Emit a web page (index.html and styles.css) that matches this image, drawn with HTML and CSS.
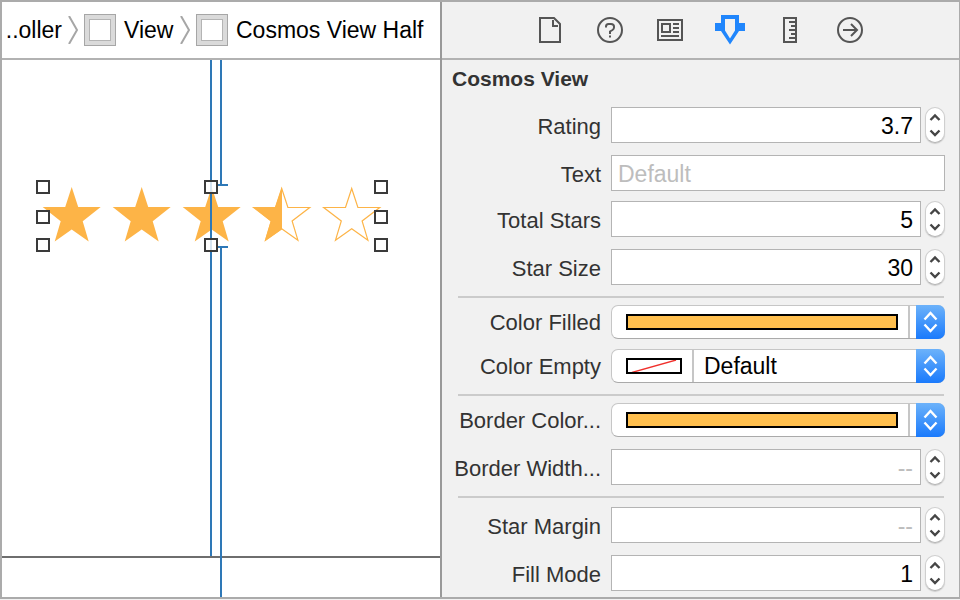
FILE: index.html
```html
<!DOCTYPE html>
<html lang="en">
<head>
<meta charset="utf-8">
<title>Cosmos View</title>
<link rel="stylesheet" href="styles.css">
</head>
<body>
<svg class="defs" aria-hidden="true">
  <defs>
    <path id="star" d="M0-21 6.500-1H29L11 13.200 17 33.500 0 21.500-17 33.500-11 13.200-29-1H-6.500Z"/>
    <path id="star-outline" d="M0-19.500 6.200-.5H28L10.400 13 16.200 32.200 0 20.700-16.200 32.200-10.400 13-28-.5H-6.200Z"/>
    <symbol id="steps" viewBox="0 0 18 34">
      <path d="M4.500 12 9 7.500 13.500 12M4.500 22.500 9 27 13.500 22.500" fill="none" stroke="#454545" stroke-width="2.400"/>
    </symbol>
    <symbol id="updown" viewBox="0 0 29 34">
      <path d="M8.500 14.500 14.500 8 20.500 14.500M8.500 19.500 14.500 26 20.500 19.500" fill="none" stroke="#fff" stroke-width="2.400"/>
    </symbol>
    <symbol id="crumb-arrow" viewBox="0 0 10 28">
      <path d="M1 0 9 14 1 28" fill="none" stroke="#a6a6a6" stroke-width="2"/>
    </symbol>
  </defs>
</svg>
<div class="window">
  <main class="editor">
    <nav class="crumbs">
      <a class="crumb crumb-first" href="#">..oller</a>
      <svg class="crumb-arrow"><use href="#crumb-arrow"/></svg>
      <a class="crumb" href="#"><span class="view-icon"></span>View</a>
      <svg class="crumb-arrow"><use href="#crumb-arrow"/></svg>
      <a class="crumb" href="#"><span class="view-icon"></span>Cosmos View Half</a>
    </nav>
    <div class="canvas">
      <svg class="drawing" width="438" height="540" viewBox="2 60 438 540">
        <path d="M2 557H440" stroke="#6e6e6e" stroke-width="2"/>
        <g fill="#fdb447">
          <use href="#star" x="71.700" y="208"/>
          <use href="#star" x="141.700" y="208"/>
          <use href="#star" x="211.700" y="208"/>
          <path d="M282 187 275.200 207H252.700L270.700 221.200 264.700 241.200 282 229.300Z"/>
        </g>
        <g fill="none" stroke="#fdb447" stroke-width="1.200">
          <use href="#star-outline" x="281.700" y="208"/>
          <use href="#star-outline" x="351.700" y="208"/>
        </g>
        <path d="M211 60V556M221 60V185M216 185H228M216 247H228M221 247V597M221 599V600" fill="none" stroke="#2e78b7" stroke-width="2"/>
        <g fill="#fff" fill-opacity=".8" stroke="#3a3a3a" stroke-width="2">
          <rect x="37" y="181" width="12" height="12"/>
          <rect x="37" y="211" width="12" height="12"/>
          <rect x="37" y="239" width="12" height="12"/>
          <rect x="205" y="181" width="12" height="12"/>
          <rect x="205" y="239" width="12" height="12"/>
          <rect x="375" y="181" width="12" height="12"/>
          <rect x="375" y="211" width="12" height="12"/>
          <rect x="375" y="239" width="12" height="12"/>
        </g>
      </svg>
    </div>
  </main>

  <aside class="inspector">
    <div class="tabs">
      <button class="tab" aria-label="File"><svg viewBox="0 0 30 30"><path d="M5 3H19L25 9V27H5Z"/><path d="M18 5V11H23" /></svg></button>
      <button class="tab" aria-label="Help"><svg viewBox="0 0 30 30"><circle cx="15" cy="15" r="12"/><path d="M11 12.500V11.500Q11 9 13.500 9H16Q19 9 19 11.500V12.500Q19 14 17.500 15L15 16.500V19M15 20.500V22.500"/></svg></button>
      <button class="tab" aria-label="Identity"><svg viewBox="0 0 30 30"><path d="M3 5H27V25H3ZM7 9H15V17H7ZM18 9H24M18 13H24M18 17H24M6 21H24"/></svg></button>
      <button class="tab tab-on" aria-label="Attributes"><svg viewBox="0 0 30 30"><path fill-rule="evenodd" d="M6 0H24V8H30V16H24L15 29.500 6 16H0V8H6ZM10 4V15.500L15 23.500 20 15.500V4Z"/></svg></button>
      <button class="tab" aria-label="Size"><svg viewBox="0 0 30 30"><path d="M9 3H21V27H9ZM14 7H21M16 11H21M14 15H21M16 19H21M14 23H21"/></svg></button>
      <button class="tab" aria-label="Connections"><svg viewBox="0 0 30 30"><circle cx="15" cy="15" r="12"/><path d="M8 15H21.500M16 9 22 15 16 21"/></svg></button>
    </div>

    <form class="attributes">
      <h2 class="title">Cosmos View</h2>
      <div class="group">
        <div class="row">
          <label for="rating">Rating</label>
          <input class="field number" id="rating" type="text" value="3.7">
          <button class="stepper" type="button" aria-label="Step rating"><svg><use href="#steps"/></svg></button>
        </div>
        <div class="row">
          <label for="text">Text</label>
          <input class="field" id="text" type="text" placeholder="Default">
        </div>
      </div>
      <div class="group">
        <div class="row">
          <label for="total">Total Stars</label>
          <input class="field number" id="total" type="text" value="5">
          <button class="stepper" type="button" aria-label="Step total stars"><svg><use href="#steps"/></svg></button>
        </div>
        <div class="row">
          <label for="size">Star Size</label>
          <input class="field number" id="size" type="text" value="30">
          <button class="stepper" type="button" aria-label="Step star size"><svg><use href="#steps"/></svg></button>
        </div>
      </div>
      <hr>
      <div class="group group-tight">
        <div class="row row-color">
          <label for="filled">Color Filled</label>
          <div class="popup">
            <button class="well well-wide" id="filled" type="button"><span class="swatch"></span></button>
            <button class="arrows" type="button" aria-label="Choose filled color"><svg><use href="#updown"/></svg></button>
          </div>
        </div>
        <div class="row row-color">
          <label for="empty">Color Empty</label>
          <div class="popup">
            <button class="well" type="button" aria-label="Empty color"><span class="swatch swatch-none"><svg viewBox="0 0 52 12"><path d="M4 12.500 48 0" stroke="#f0302c" stroke-width="1.300"/></svg></span></button>
            <select class="choice" id="empty"><option>Default</option></select>
            <span class="arrows arrows-over"><svg><use href="#updown"/></svg></span>
          </div>
        </div>
      </div>
      <hr>
      <div class="group">
        <div class="row row-color">
          <label for="border-color">Border Color...</label>
          <div class="popup">
            <button class="well well-wide" id="border-color" type="button"><span class="swatch"></span></button>
            <button class="arrows" type="button" aria-label="Choose border color"><svg><use href="#updown"/></svg></button>
          </div>
        </div>
        <div class="row">
          <label for="border-width">Border Width...</label>
          <input class="field number" id="border-width" type="text" placeholder="--">
          <button class="stepper" type="button" aria-label="Step border width"><svg><use href="#steps"/></svg></button>
        </div>
      </div>
      <hr>
      <div class="group group-last">
        <div class="row">
          <label for="margin">Star Margin</label>
          <input class="field number" id="margin" type="text" placeholder="--">
          <button class="stepper" type="button" aria-label="Step star margin"><svg><use href="#steps"/></svg></button>
        </div>
        <div class="row">
          <label for="mode">Fill Mode</label>
          <input class="field number" id="mode" type="text" value="1">
          <button class="stepper" type="button" aria-label="Step fill mode"><svg><use href="#steps"/></svg></button>
        </div>
      </div>
    </form>
  </aside>
</div>
</body>
</html>
```

FILE: styles.css
```css
* {
  box-sizing: border-box;
}

body {
  margin: 0;
  background: #f1f1f1;
  font-family: "Liberation Sans", Arial, sans-serif;
  font-size: 22px;
  color: #333;
}

button,
input,
select {
  margin: 0;
  padding: 0;
  border: 0;
  border-radius: 0;
  background: none;
  font-family: inherit;
  font-size: 23px;
  color: #000;
  appearance: none;
}

svg {
  display: block;
}

.defs {
  position: absolute;
  width: 0;
  height: 0;
}

.window {
  display: grid;
  grid-template-columns: minmax(0, 438fr) minmax(0, 519fr);
  min-height: calc(100vh - 1px);
  border: 2px solid #ababab;
  border-right-width: 1px;
}

/* Editor */

.editor {
  display: flex;
  flex-direction: column;
  min-width: 0;
  background: #fff;
}

.crumbs {
  display: flex;
  align-items: center;
  gap: 6px;
  height: 58px;
  border-bottom: 2px solid #b2b2b2;
  white-space: nowrap;
}

.crumb {
  display: flex;
  align-items: center;
  gap: 8px;
  min-width: 90px;
  font-size: 23px;
  line-height: 28px;
  color: #000;
  text-decoration: none;
}

.crumb-first {
  min-width: 60px;
  justify-content: flex-end;
}

.crumb-arrow {
  width: 10px;
  height: 28px;
}

.view-icon {
  width: 32px;
  height: 32px;
  border: 1px solid #a6a6a6;
  background: #fff;
  box-shadow: inset 0 0 0 4px #dadada, inset 0 0 0 5px #b4b4b4;
}

.canvas {
  position: relative;
  flex: 1;
}

.drawing {
  position: absolute;
  top: 0;
  left: 0;
}

/* Inspector */

.inspector {
  min-width: 0;
  border-left: 2px solid #999;
  background: #f1f1f1;
}

.tabs {
  display: flex;
  align-items: center;
  justify-content: center;
  gap: 30px;
  height: 58px;
  padding-right: 2px;
  border-bottom: 2px solid #b2b2b2;
}

.tab svg {
  width: 30px;
  height: 30px;
  fill: none;
  stroke: #555;
  stroke-width: 2;
}

.tab-on svg {
  fill: #2086fc;
  stroke: none;
}

.attributes {
  padding: 5px 14px 6px 0;
}

.title {
  margin: 0 0 14px 10px;
  font-size: 21px;
  line-height: 28px;
}

.group {
  display: grid;
  grid-template-columns: minmax(0, 1fr);
  gap: 12px;
}

.group + .group {
  margin-top: 10px;
}

.group-tight {
  gap: 10px;
}

.group-last {
  padding-top: 2px;
}

hr {
  height: 2px;
  margin: 11px 1px 7px 16px;
  border: 0;
  background: #cbcbcb;
}

.row {
  display: flex;
  align-items: center;
}

label {
  flex: none;
  width: 159px;
  margin-right: 10px;
  padding-top: 4px;
  line-height: 28px;
  text-align: right;
  white-space: nowrap;
}

.row-color label {
  padding-top: 2px;
}

.field {
  flex: 1;
  min-width: 0;
  height: 36px;
  padding: 2px 7px 0 6px;
  border: 1px solid #b4b4b4;
  background: #fff;
}

.field::placeholder {
  color: #bdbdbd;
}

.number {
  text-align: right;
}

.stepper {
  flex: none;
  width: 20px;
  height: 36px;
  margin-left: 4px;
  border: 1px solid #cfcfcf;
  border-bottom-color: #b4b4b4;
  border-radius: 10px;
  background: #fff;
  box-shadow: 0 1px 1px #ccc;
}

.stepper svg {
  width: 18px;
  height: 34px;
}

.popup {
  position: relative;
  display: flex;
  flex: 1;
  height: 34px;
  border: 1px solid #c6c6c6;
  border-bottom-color: #aaa;
  border-radius: 7px;
  background: #fff;
}

.well {
  flex: none;
  width: 82px;
  padding: 0 10px 0 14px;
  border-right: 2px solid #c6c6c6;
}

.well-wide {
  flex: 1;
  margin-right: 6px;
}

.swatch {
  display: block;
  height: 16px;
  border: 2px solid #000;
  background: #ffbf4e;
}

.swatch-none {
  background: #fff;
}

.choice {
  flex: 1;
  min-width: 0;
  padding-left: 10px;
}

.arrows {
  flex: none;
  width: 29px;
  height: 34px;
  margin: -1px -1px -1px 0;
  border-radius: 0 7px 7px 0;
  background: linear-gradient(#6cb2fa, #1a7afc);
}

.arrows-over {
  pointer-events: none;
}

.arrows svg {
  width: 29px;
  height: 34px;
}
```
